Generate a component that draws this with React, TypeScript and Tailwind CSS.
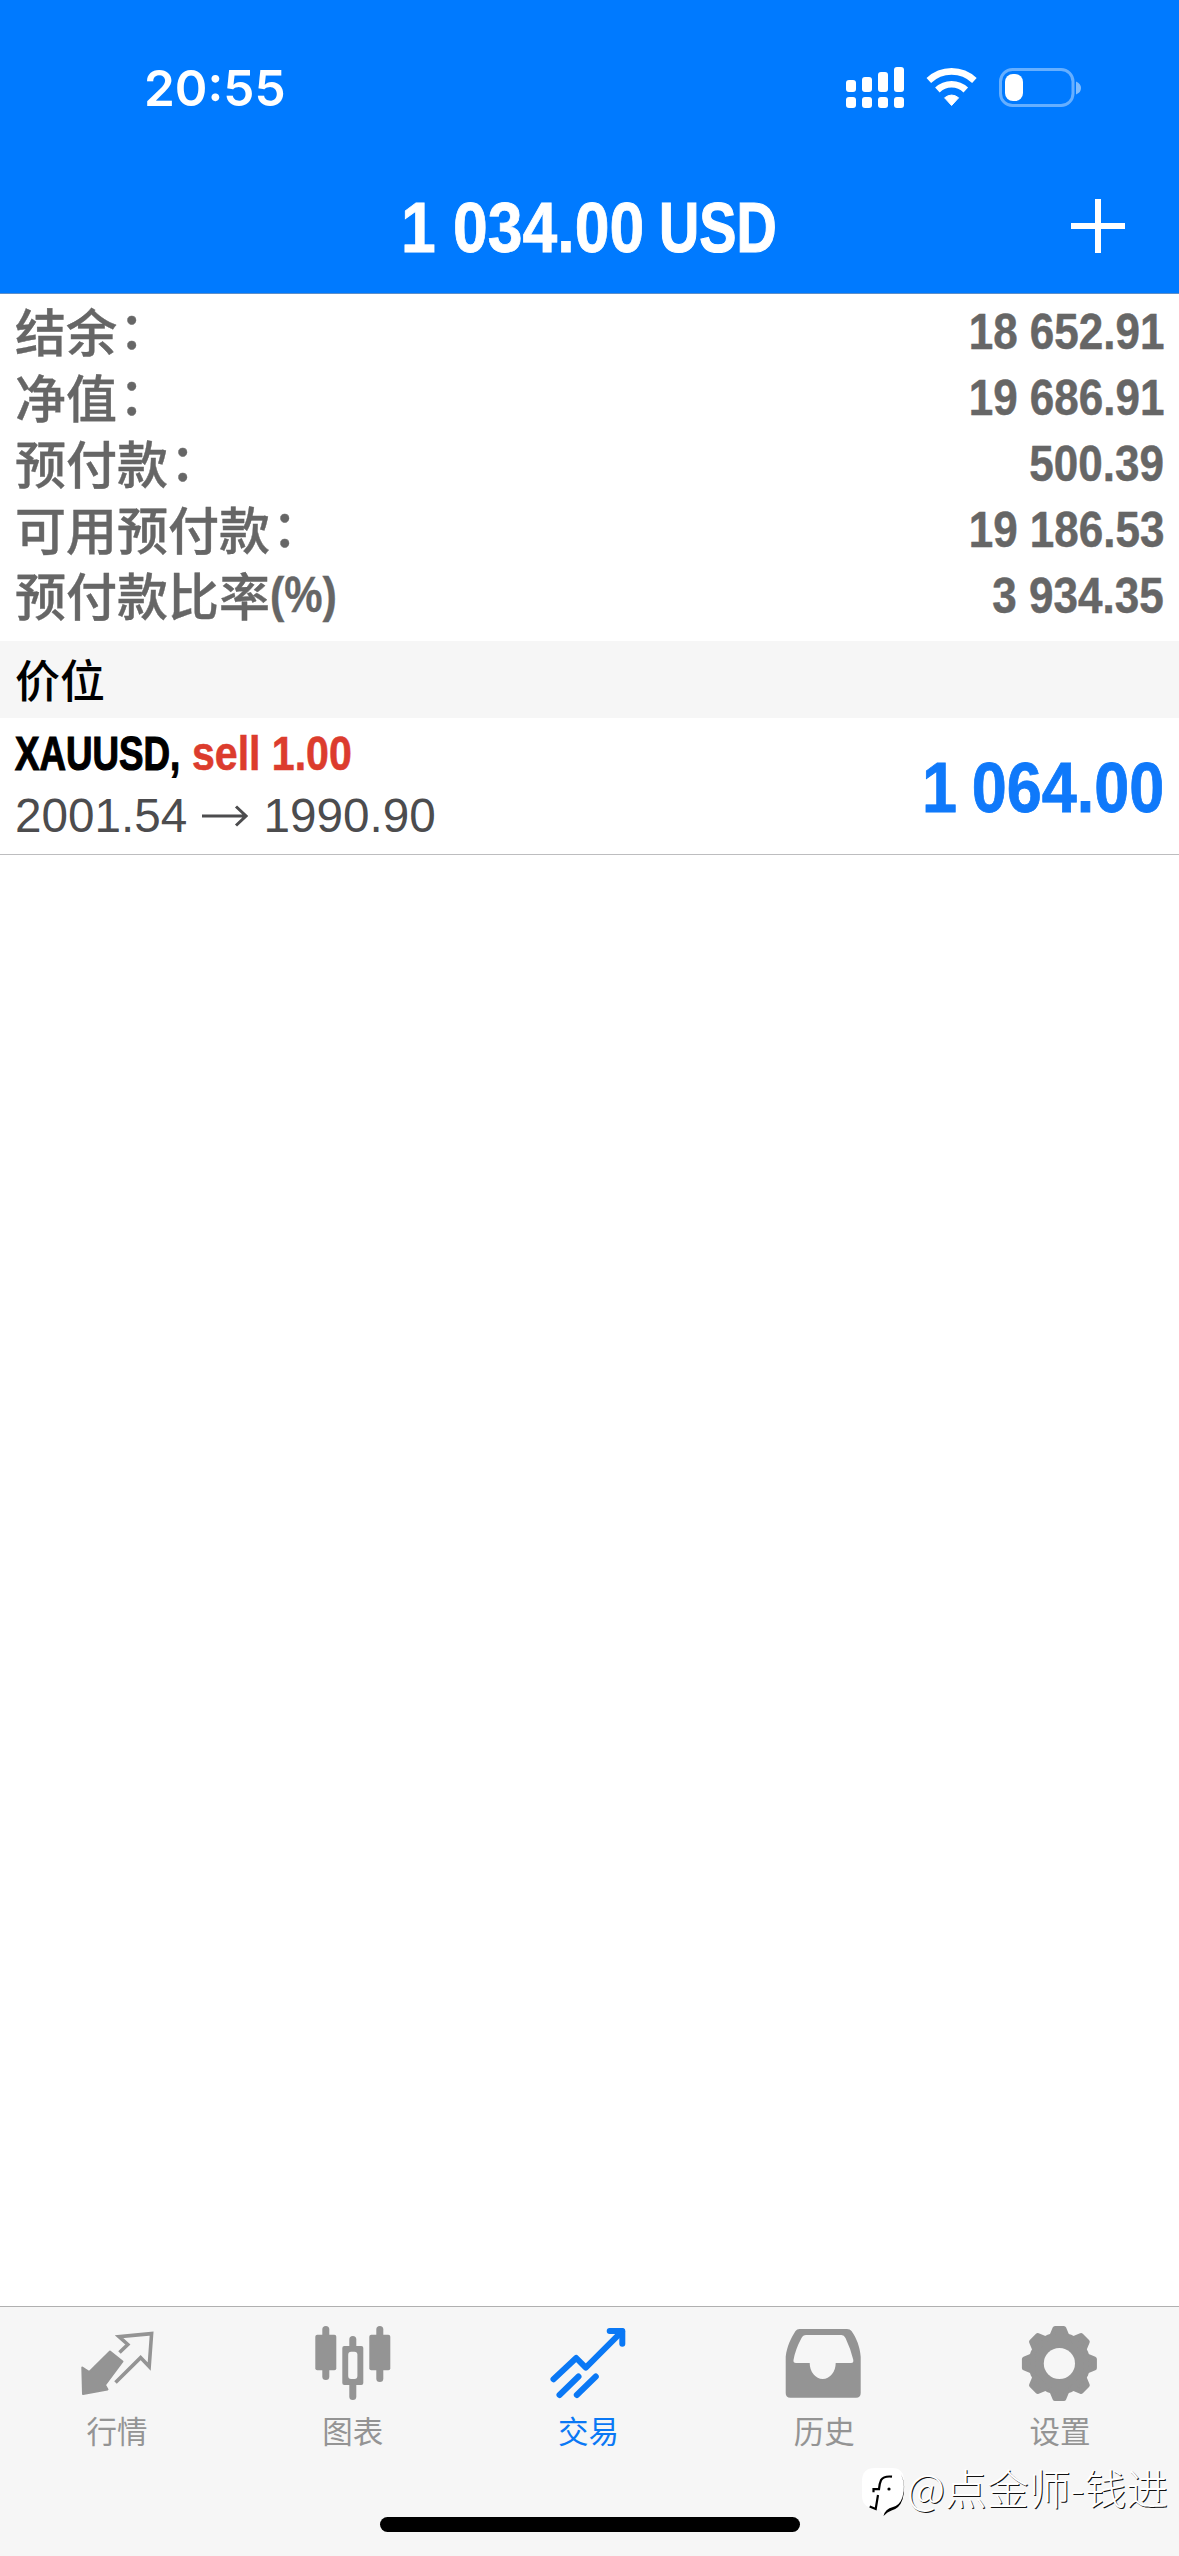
import type { ReactNode } from "react";

interface Tab {
  label: string;
  icon: ReactNode;
  active?: boolean;
}

const summary = [
  { label: "结余", suffix: "：", value: "18 652.91" },
  { label: "净值", suffix: "：", value: "19 686.91" },
  { label: "预付款", suffix: "：", value: "500.39" },
  { label: "可用预付款", suffix: "：", value: "19 186.53" },
  { label: "预付款比率", unit: "(%)", value: "3 934.35" },
];

const QuotesIcon = () => (
  <svg viewBox="0 0 80 80" className="size-20" fill="none">
    <path
      d="M4.300 43.500l7 4.500L32 27.500l12.500 10L27 61l2.500 4.500L5 70z"
      fill="currentColor"
      stroke="currentColor"
      strokeWidth="2"
      strokeLinejoin="round"
    />
    <path
      d="M41.500 28.500l8.300-8L41 12.600 73.600 9.600l-2.400 33-8.600-9L37.500 58.500"
      stroke="currentColor"
      strokeWidth="3.6"
    />
  </svg>
);

const ChartIcon = () => (
  <svg viewBox="0 0 80 80" className="size-20" fill="currentColor">
    <rect x="8.3" y="2" width="7" height="54" rx="3.5" />
    <rect x="1.3" y="10.7" width="21" height="35.5" rx="2" />
    <rect x="35.3" y="12" width="7" height="64" rx="3.5" />
    <rect x="28.3" y="22" width="21" height="39" rx="2" />
    <rect x="34.2" y="27.7" width="9.2" height="27.3" rx="3" className="fill-[#f6f6f6]" />
    <rect x="62.3" y="2" width="7" height="56" rx="3.5" />
    <rect x="55.3" y="10.7" width="21" height="35.5" rx="2" />
  </svg>
);

const TradeIcon = () => (
  <svg
    viewBox="0 0 80 80"
    className="size-20"
    fill="none"
    stroke="currentColor"
    strokeWidth="6"
    strokeLinecap="round"
    strokeLinejoin="round"
  >
    <path d="M4.500 55.300L27.200 34l9.600 9.600L73 7.300" />
    <path d="M60.700 7h12.600v12.800" />
    <path d="M10.500 71l19-18.500M27.800 71l19-18.500" />
  </svg>
);

const HistoryIcon = () => (
  <svg viewBox="0 0 80 80" className="size-20" fill="currentColor">
    <path
      fillRule="evenodd"
      d="M.7 32.700C2 22 6 14 10.500 7q1.500-2 4-2h47.500q3 0 4.500 2C71.500 14 75 23 75.700 32.700V69q0 4.700-4.700 4.700H5.400Q.7 73.700.7 69zM21 11q-3 0-4.500 3-6 11-8 22-.5 3 2.500 3h13.700a13 16 0 0 0 26 0H66q3 0 2.200-3.500-2.700-11-7.700-21.500-1.500-3-4-3z"
    />
  </svg>
);

const SettingsIcon = () => (
  <svg viewBox="0 0 80 80" className="size-20">
    <g fill="currentColor" stroke="currentColor" strokeLinejoin="round">
      <circle cx="38.4" cy="39.5" r="31" stroke="none" />
      {[0, 45, 90, 135, 180, 225, 270, 315].map((angle) => (
        <path
          key={angle}
          d="M30.500 13l3.500-8.500h8.800L46.300 13z"
          strokeWidth="5"
          transform={`rotate(${angle} 38.4 39.5)`}
        />
      ))}
    </g>
    <circle cx="38.4" cy="39.5" r="15.6" className="fill-[#f6f6f6]" />
  </svg>
);

const tabs: Tab[] = [
  { label: "行情", icon: <QuotesIcon /> },
  { label: "图表", icon: <ChartIcon /> },
  { label: "交易", icon: <TradeIcon />, active: true },
  { label: "历史", icon: <HistoryIcon /> },
  { label: "设置", icon: <SettingsIcon /> },
];

function StatusIcons() {
  return (
    <svg viewBox="0 0 240 44" className="h-11 w-60" fill="white">
      {/* Dual SIM signal */}
      <rect x="2" y="14" width="10" height="12" rx="3" />
      <rect x="18" y="11" width="10" height="15" rx="3" />
      <rect x="34" y="6" width="10" height="20" rx="3" />
      <rect x="50" y="1" width="10" height="25" rx="3" />
      {[2, 18, 34, 50].map((x) => (
        <rect key={x} x={x} y="31" width="10" height="11" rx="3" />
      ))}

      {/* Wi-Fi */}
      <path d="M107.600 39.500L100.600 31.800q7-5.500 14 0z" stroke="white" strokeLinejoin="round" />
      <g fill="none" stroke="white" strokeWidth="6.6">
        <path d="M84.800 14.500a33 33 0 0 1 45.600 0" />
        <path d="M93.400 24a20.500 20.500 0 0 1 28.400 0" />
      </g>

      {/* Battery */}
      <rect x="156.5" y="3.5" width="72.5" height="36" rx="12" fill="none" stroke="white" strokeOpacity=".4" strokeWidth="3" />
      <path d="M232 15.500q5 2 5 6.500t-5 6.500z" fillOpacity=".5" />
      <rect x="161" y="8" width="18" height="27" rx="8" />
    </svg>
  );
}

function TabItem({ label, icon, active }: Tab) {
  return (
    <button
      type="button"
      className={`flex flex-1 flex-col items-center pt-[17px] ${active ? "text-[#0a78f5]" : "text-[#949494]"}`}
    >
      {icon}
      <span className="mt-[3px] mr-[2px] text-[30.5px] leading-[46px]">{label}</span>
    </button>
  );
}

export default function App() {
  return (
    <div
      lang="zh-CN"
      className="relative flex h-[2556px] w-[1179px] flex-col overflow-hidden bg-white font-['Liberation_Sans','Noto_Sans_CJK_SC',sans-serif]"
    >
      <header className="flex h-[294px] flex-col border-b border-[#5f8fc8] bg-[#007aff] text-white">
        <div className="flex h-[152px] items-start justify-between pt-[66px] pr-[95px] pl-[144px]">
          <span className="font-['Inter',sans-serif] text-[49.5px] leading-11 font-semibold">20:55</span>
          <StatusIcons />
        </div>
        <div className="grid h-[141px] grid-cols-[1fr_auto_1fr] items-start">
          <span />
          <h1 className="flex w-[371px] text-[71px] leading-[152px] font-bold whitespace-nowrap">
            <span className="-ml-[3px] origin-left scale-x-[0.88] [-webkit-text-stroke:0.8px_white]">1 034.00</span>
            <span className="-ml-[18px] origin-left scale-x-[0.785] [-webkit-text-stroke:1.2px_white]">USD</span>
          </h1>
          <button type="button" className="mt-[47px] mr-[54px] justify-self-end" aria-label="新订单">
            <svg viewBox="0 0 54 54" className="size-[54px]" stroke="white" strokeWidth="6">
              <path d="M0 27h54M27 0v54" />
            </svg>
          </button>
        </div>
      </header>

      <section className="flex h-[347px] flex-col pt-[5px] pr-[15px] pl-[15px] text-[#666]">
        {summary.map((row) => (
          <div key={row.label} className="flex h-[66px] items-center justify-between">
            <span className="flex pt-1.5 text-[51px] leading-[66px] font-medium [-webkit-text-stroke:0.4px_#666]">
              {row.label}
              {row.suffix && <span className="translate-x-0.5 -translate-y-[3px]">{row.suffix}</span>}
              {row.unit && (
                <span className="origin-left -translate-y-1 scale-x-[0.86] text-[50px] font-bold">{row.unit}</span>
              )}
            </span>
            <span className="origin-right scale-x-[0.88] text-[50px] leading-[66px] font-bold [-webkit-text-stroke:0.5px_#666]">
              {row.value}
            </span>
          </div>
        ))}
      </section>

      <h2 className="h-[77px] bg-[#f6f6f6] pl-[15px] font-['Noto_Sans_CJK_SC',sans-serif] text-[45px] leading-[75px] font-medium text-black">
        价位
      </h2>

      <section className="flex h-[137px] items-center justify-between border-b border-[#bdbdbf] pr-[15px] pl-[15px]">
        <div className="flex flex-col pb-[2px]">
          <div className="flex text-[48px] leading-[62px] font-bold whitespace-nowrap">
            <span className="origin-left scale-x-[0.765] text-black [-webkit-text-stroke:1.2px_black]">XAUUSD,</span>
            <span className="-ml-[39px] origin-left scale-x-[0.855] text-[#dc3c2d] [-webkit-text-stroke:0.6px_#dc3c2d]">
              sell 1.00
            </span>
          </div>
          <span className="flex items-center text-[47.7px] leading-[62px] text-[#4c4c4e]">
            2001.54
            <svg viewBox="0 0 46 22" className="mr-[15px] ml-[15px] h-[22px] w-[46px]" fill="none" stroke="currentColor" strokeWidth="3">
              <path d="M0 11h44M34 1.500L44 11l-10 9.500" />
            </svg>
            1990.90
          </span>
        </div>
        <span className="mt-[3px] origin-right scale-x-[0.887] text-[71px] leading-none font-bold text-[#0f79fa] [word-spacing:-3px] [-webkit-text-stroke:0.8px_#0f79fa]">
          1 064.00
        </span>
      </section>

      <main className="flex-1" />

      <nav className="flex h-[250px] flex-col border-t border-[#b0b0b0] bg-[#f6f6f6]">
        <div className="flex h-[210px] font-['Noto_Sans_CJK_SC',sans-serif]">
          {tabs.map((tab) => (
            <TabItem key={tab.label} {...tab} />
          ))}
        </div>
        <div className="mx-auto h-[15px] w-[420px] rounded-full bg-black" />
      </nav>

      {/* Author watermark over the tab bar */}
      <div className="absolute right-[11px] bottom-[38px] flex items-start">
        <svg viewBox="0 0 46 52" className="h-[52px] w-[46px]" fill="none">
          <path d="M14 2h17q12 0 12 13v13q0 12-13 15-6 1-8 6l-4-6Q1 43 1 30V15Q1 2 14 2z" fill="white" />
          <path d="M31 10.700q-8-1-11 3.500-1.500 3-2 9h-5.500v3M17 29l-2.300 14-6-2.500" stroke="black" strokeWidth="2.2" />
          <path d="M40 8q5 12 1.500 23-2.500 8-9.500 10-8 2-9.500 9 4-4.500 8-5.500 8-2 11-11 4-14-1.500-25.500z" fill="black" />
          <circle cx="28" cy="23" r="1.6" fill="black" />
        </svg>
        <span className="font-['Noto_Sans_CJK_SC',sans-serif] text-[41.8px] leading-[42px] font-light text-white [text-shadow:1px_1px_0.5px_#111]">
          @点金师-钱进
        </span>
      </div>
    </div>
  );
}
